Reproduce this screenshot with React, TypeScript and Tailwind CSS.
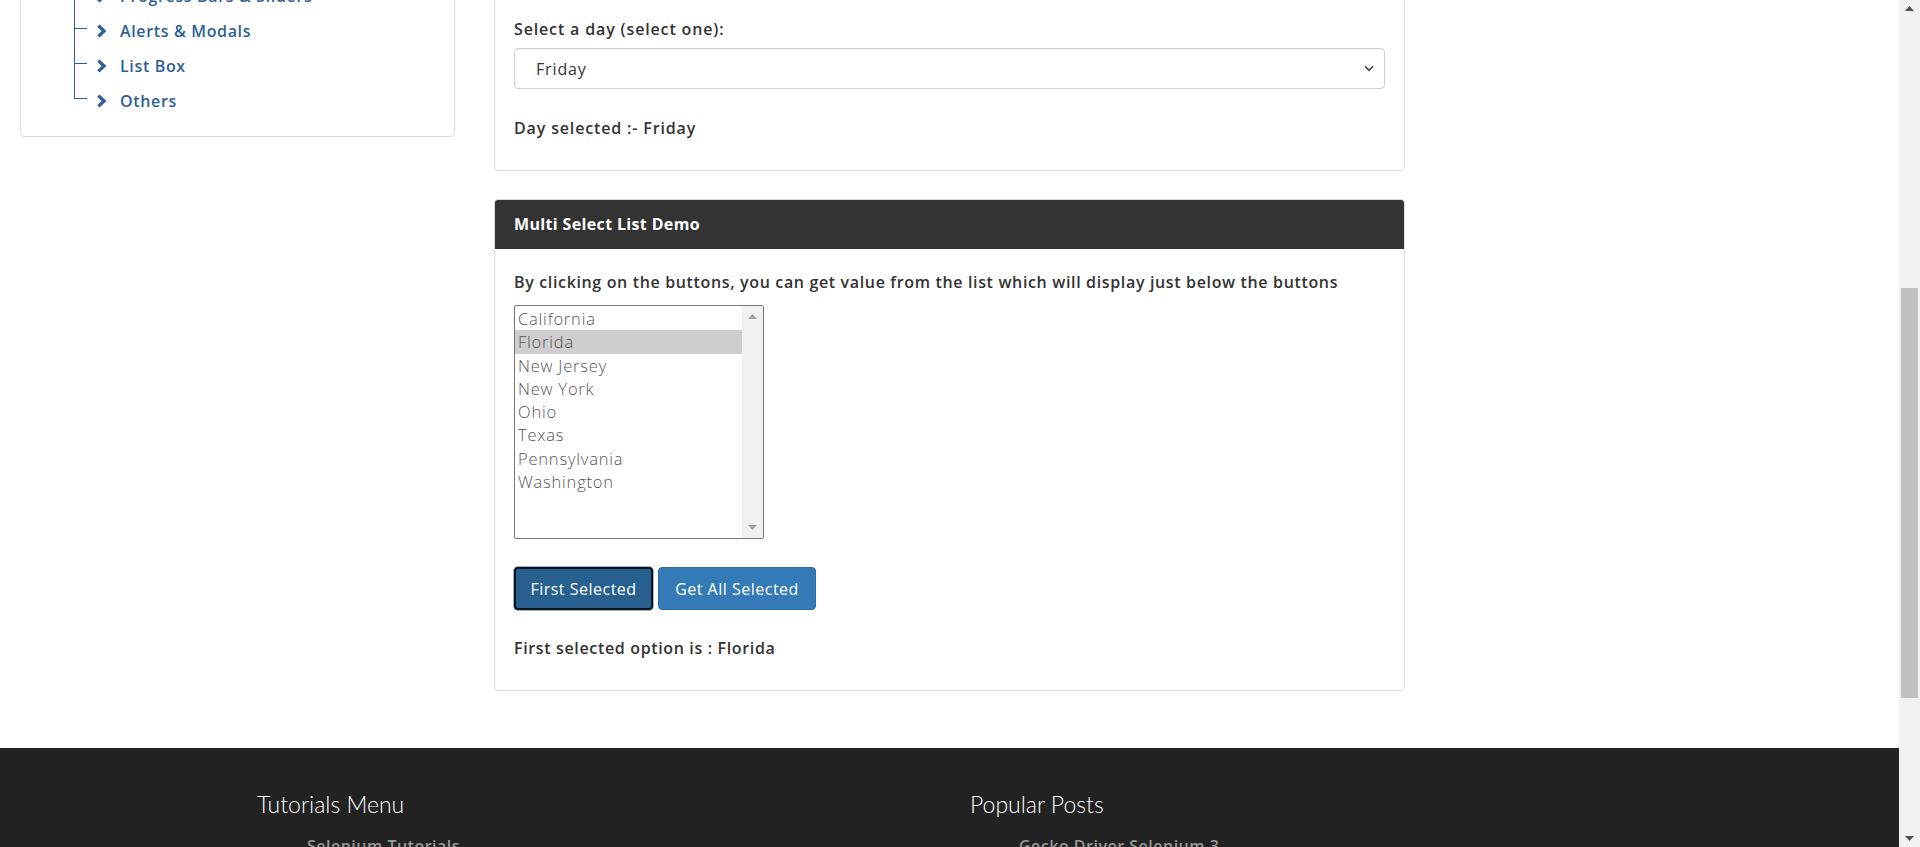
import React from 'react';

const TREE = ['Progress Bars & Sliders', 'Alerts & Modals', 'List Box', 'Others'];
const STATES = ['California', 'Florida', 'New Jersey', 'New York', 'Ohio', 'Texas', 'Pennsylvania', 'Washington'];

function Chevron() {
  return (
    <svg width="11" height="14" viewBox="0 0 11 14" className="shrink-0">
      <path d="M2.4 1.6 L8 7 L2.4 12.4" fill="none" stroke="#2f5f98" strokeWidth="3.4" />
    </svg>
  );
}

function Arrow({ down }: { down?: boolean }) {
  return (
    <svg width="9" height="5" viewBox="0 0 9 5">
      <path d={down ? 'M0 0 H9 L4.5 5 Z' : 'M0 5 H9 L4.5 0 Z'} fill="currentColor" />
    </svg>
  );
}

function Sidebar() {
  return (
    <div className="w-[435px] shrink-0 self-start rounded-[4px] border border-[#dddddd] bg-white pt-[37px] pb-[18px]">
      {TREE.map((t, i) => {
        const last = i === TREE.length - 1;
        return (
          <div key={t} className="flex h-[35px]">
            <div className="ml-[53px] flex w-[13px] flex-col">
              <div className="h-[16px] border-b border-l border-[#2f5f98]" />
              {!last && <div className="flex-1 border-l border-[#2f5f98]" />}
            </div>
            <div className="ml-[9px] flex items-center gap-[13px]">
              <Chevron />
              <span className="text-[16px] font-semibold tracking-[0.65px] text-[#2f5f98]">{t}</span>
            </div>
          </div>
        );
      })}
    </div>
  );
}

function SelectPanel() {
  return (
    <div className="rounded-[4px] border border-[#dddddd] bg-white px-[19px] pt-[18px] pb-[31px] text-[16px] leading-[22px] tracking-[0.85px] text-[#333]">
      <p className="font-semibold">Select a value from the dropdown list and the day you pick will display just below the list</p>
      <p className="mt-[17px] font-semibold">Select a day (select one):</p>
      <div className="mt-[8px] flex h-[41px] items-center justify-between rounded-[4px] border border-[#cfcfcf] pl-[21px] pr-[10px] shadow-[inset_0_1px_1px_rgba(0,0,0,0.05)]">
        <span className="font-medium">Friday</span>
        <svg width="10" height="7" viewBox="0 0 10 7">
          <path d="M1 1.2 L5 5.4 L9 1.2" fill="none" stroke="#444" strokeWidth="1.6" />
        </svg>
      </div>
      <p className="mt-[28px] font-semibold">Day selected :- Friday</p>
    </div>
  );
}

function MultiPanel() {
  return (
    <div className="mt-[28px] rounded-[4px] border border-[#dddddd] bg-white text-[16px] leading-[22px] text-[#333]">
      <div className="h-[49px] rounded-t-[3px] bg-[#333333] pl-[19px] text-[16px] leading-[49px] font-bold tracking-[0.35px] text-white">
        Multi Select List Demo
      </div>
      <div className="px-[19px] pt-[22px] pb-[31px]">
        <p className="font-semibold tracking-[0.65px]">By clicking on the buttons, you can get value from the list which will display just below the buttons</p>
        <div className="mt-[12px] flex h-[234px] w-[250px] rounded-[2px] border border-[#767676] bg-white">
          <div className="flex-1 pt-[1px] text-[16.5px] font-light tracking-[0.8px] text-[#555]">
            {STATES.map(s => (
              <div key={s} className={`h-[23.3px] pl-[3px] leading-[23px] ${s === 'Florida' ? 'bg-[#cecece]' : ''}`}>{s}</div>
            ))}
          </div>
          <div className="flex w-[21px] flex-col items-center justify-between bg-[#f0f0f0] py-[8px] text-[#a3a3a3]">
            <Arrow />
            <Arrow down />
          </div>
        </div>
        <div className="mt-[28px] flex gap-[5px]">
          <button className="h-[43px] w-[139px] rounded-[4px] border-2 border-[#0b1520] bg-[#286090] text-[16px] font-normal tracking-[0.5px] text-white shadow-[0_0_0_1px_#9fb3c6]">
            First Selected
          </button>
          <button className="h-[43px] w-[158px] rounded-[4px] border border-[#2e6da4] bg-[#337ab7] text-[16px] font-normal tracking-[0.5px] text-white">
            Get All Selected
          </button>
        </div>
        <p className="mt-[27px] font-semibold tracking-[0.65px]">First selected option is : Florida</p>
      </div>
    </div>
  );
}

function Footer() {
  return (
    <div className="mt-[57px] h-[300px] bg-[#222222] pt-[41px] text-white">
      <div className="flex pl-[257px]">
        <div className="w-[713px]">
          <h3 className="font-['Lato',sans-serif] text-[23px] leading-[30px] font-light">Tutorials Menu</h3>
          <ul className="mt-[16px] pl-[50px] text-[16px] leading-[22px] font-semibold tracking-[0.5px] text-[#999]">
            <li>Selenium Tutorials</li>
          </ul>
        </div>
        <div>
          <h3 className="font-['Lato',sans-serif] text-[23px] leading-[30px] font-light">Popular Posts</h3>
          <ul className="mt-[16px] pl-[49px] text-[16px] leading-[22px] font-semibold tracking-[0.5px] text-[#999]">
            <li>Gecko Driver Selenium 3</li>
          </ul>
        </div>
      </div>
    </div>
  );
}

export default function App() {
  return (
    <div className="flex h-[847px] w-full overflow-hidden bg-white font-['Open_Sans',sans-serif]">
      <div className="min-w-0 flex-1 overflow-hidden">
        <div className="-mt-[60px]">
          <div className="flex pl-[20px]">
            <Sidebar />
            <div className="mt-[20px] ml-[39px] w-[911px]">
              <SelectPanel />
              <MultiPanel />
            </div>
          </div>
          <Footer />
        </div>
      </div>
      <div className="flex w-[21px] shrink-0 flex-col bg-[#f1f1f1] text-[#505050]">
        <div className="flex h-[17px] items-center justify-center"><Arrow /></div>
        <div className="h-[271px]" />
        <div className="mx-[2px] h-[410px] bg-[#c1c1c1]" />
        <div className="flex-1" />
        <div className="flex h-[17px] items-center justify-center"><Arrow down /></div>
      </div>
    </div>
  );
}
